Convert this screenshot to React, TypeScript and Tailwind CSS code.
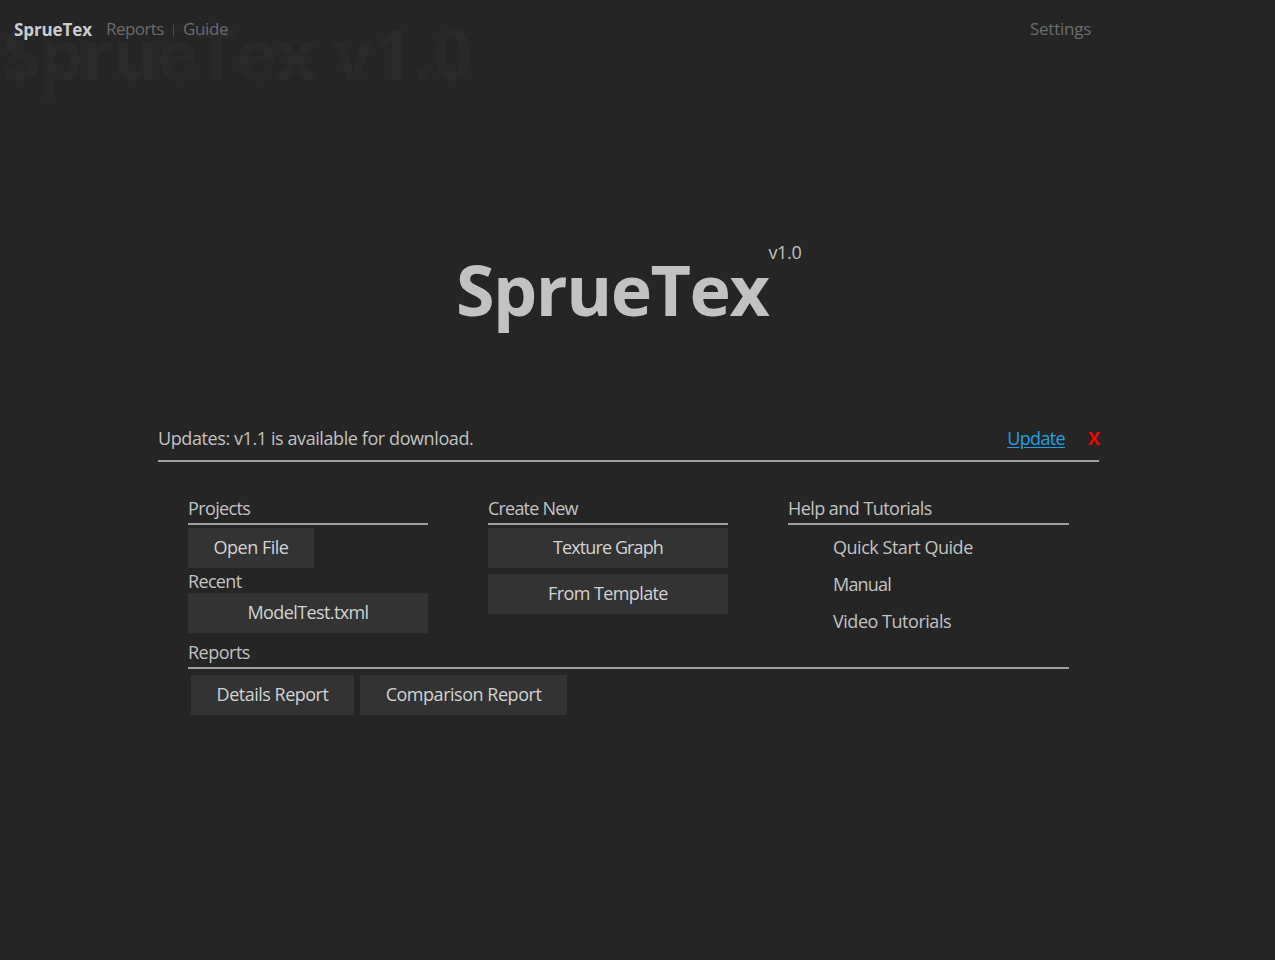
import type { ReactNode } from "react";

function SectionTitle({ children, className }: { children: ReactNode; className: string }) {
  return (
    <h2 className={`h-[27px] border-b-2 border-[#a0a0a0] text-[18px] leading-[20px] text-[#c2c2c2] ${className}`}>
      {children}
    </h2>
  );
}

function Tile({ children, className }: { children: ReactNode; className: string }) {
  return (
    <button className={`block h-10 bg-[#333333] pb-[2px] text-center text-[18px] leading-[38px] text-[#d2d2d2] ${className}`}>
      {children}
    </button>
  );
}

export default function App() {
  return (
    <div className="relative h-[960px] w-[1275px] overflow-hidden bg-[#252525] font-['Open_Sans','Noto_Sans',sans-serif] whitespace-nowrap text-[#c2c2c2]">
      <div
        className="absolute top-[8px] left-[2px] text-[70px] leading-[90px] font-bold text-[#292929]"
        aria-hidden="true"
      >
        <span className="tracking-[-1.45px]">SprueTex</span> v1.0
      </div>
      <header className="relative flex h-[58px] w-[1099px] items-center pl-[14px] text-[17px] text-[#6b6b6b]">
        <span className="w-[92px] pt-[2px] font-bold tracking-[-0.1px] text-[#cccccc]">SprueTex</span>
        <span className="w-[67px] tracking-[-0.55px]">Reports</span>
        <span className="mt-1 h-3 w-px bg-[#4a4a4a]" />
        <span className="ml-[9px] tracking-[-0.4px]">Guide</span>
        <span className="mr-2 ml-auto tracking-[-0.25px]">Settings</span>
      </header>

      <main className="ml-[158px] w-[941px]">
        <div className="flex h-[367px] pt-[182px] pl-[298px]">
          <h1 className="mt-px h-[100px] text-[70px] leading-[97px] font-bold tracking-[-1.5px]">SprueTex</h1>
          <span className="h-6 text-[18px] leading-[24px] tracking-[-0.3px]">v1.0</span>
        </div>

        <div className="flex h-[37px] border-b-2 border-[#a0a0a0] text-[18px] leading-[26px]">
          <span className="tracking-[-0.41px]">Updates: v1.1 is available for download.</span>
          <a className="ml-auto tracking-[-0.65px] text-[#1ba1e2] underline underline-offset-2">Update</a>
          <button className="-mr-px ml-[23px] h-[26px] font-bold text-[#ff0000]">X</button>
        </div>

        <div className="flex gap-[60px] pt-9 pl-[30px]">
          <section className="h-[144px] w-[240px]">
            <SectionTitle className="tracking-[-0.62px]">Projects</SectionTitle>
            <Tile className="mt-[3px] w-[126px] tracking-[-0.5px]">Open File</Tile>
            <div className="h-[25px] text-[18px] leading-[26px] tracking-[-0.67px]">Recent</div>
            <Tile className="w-[240px] tracking-[-0.6px]">ModelTest.txml</Tile>
          </section>
          <section className="w-[240px]">
            <SectionTitle className="tracking-[-0.8px]">Create New</SectionTitle>
            <Tile className="mt-[3px] w-[240px] tracking-[-0.9px]">Texture Graph</Tile>
            <Tile className="mt-[6px] w-[240px] tracking-[-0.6px]">From Template</Tile>
          </section>
          <section className="w-[281px]">
            <SectionTitle className="tracking-[-0.55px]">Help and Tutorials</SectionTitle>
            <ul className="mt-[4px] pl-[45px] text-[18px] leading-[37px]">
              <li className="tracking-[-0.47px]">Quick Start Quide</li>
              <li className="tracking-[-0.8px]">Manual</li>
              <li className="tracking-[-0.47px]">Video Tutorials</li>
            </ul>
          </section>
        </div>

        <section className="ml-[30px] w-[881px]">
          <SectionTitle className="tracking-[-0.5px]">Reports</SectionTitle>
          <div className="flex gap-[6px] pt-[6px] pl-[3px]">
            <Tile className="w-[163px] tracking-[-0.5px]">Details Report</Tile>
            <Tile className="w-[207px] tracking-[-0.47px]">Comparison Report</Tile>
          </div>
        </section>
      </main>
    </div>
  );
}
